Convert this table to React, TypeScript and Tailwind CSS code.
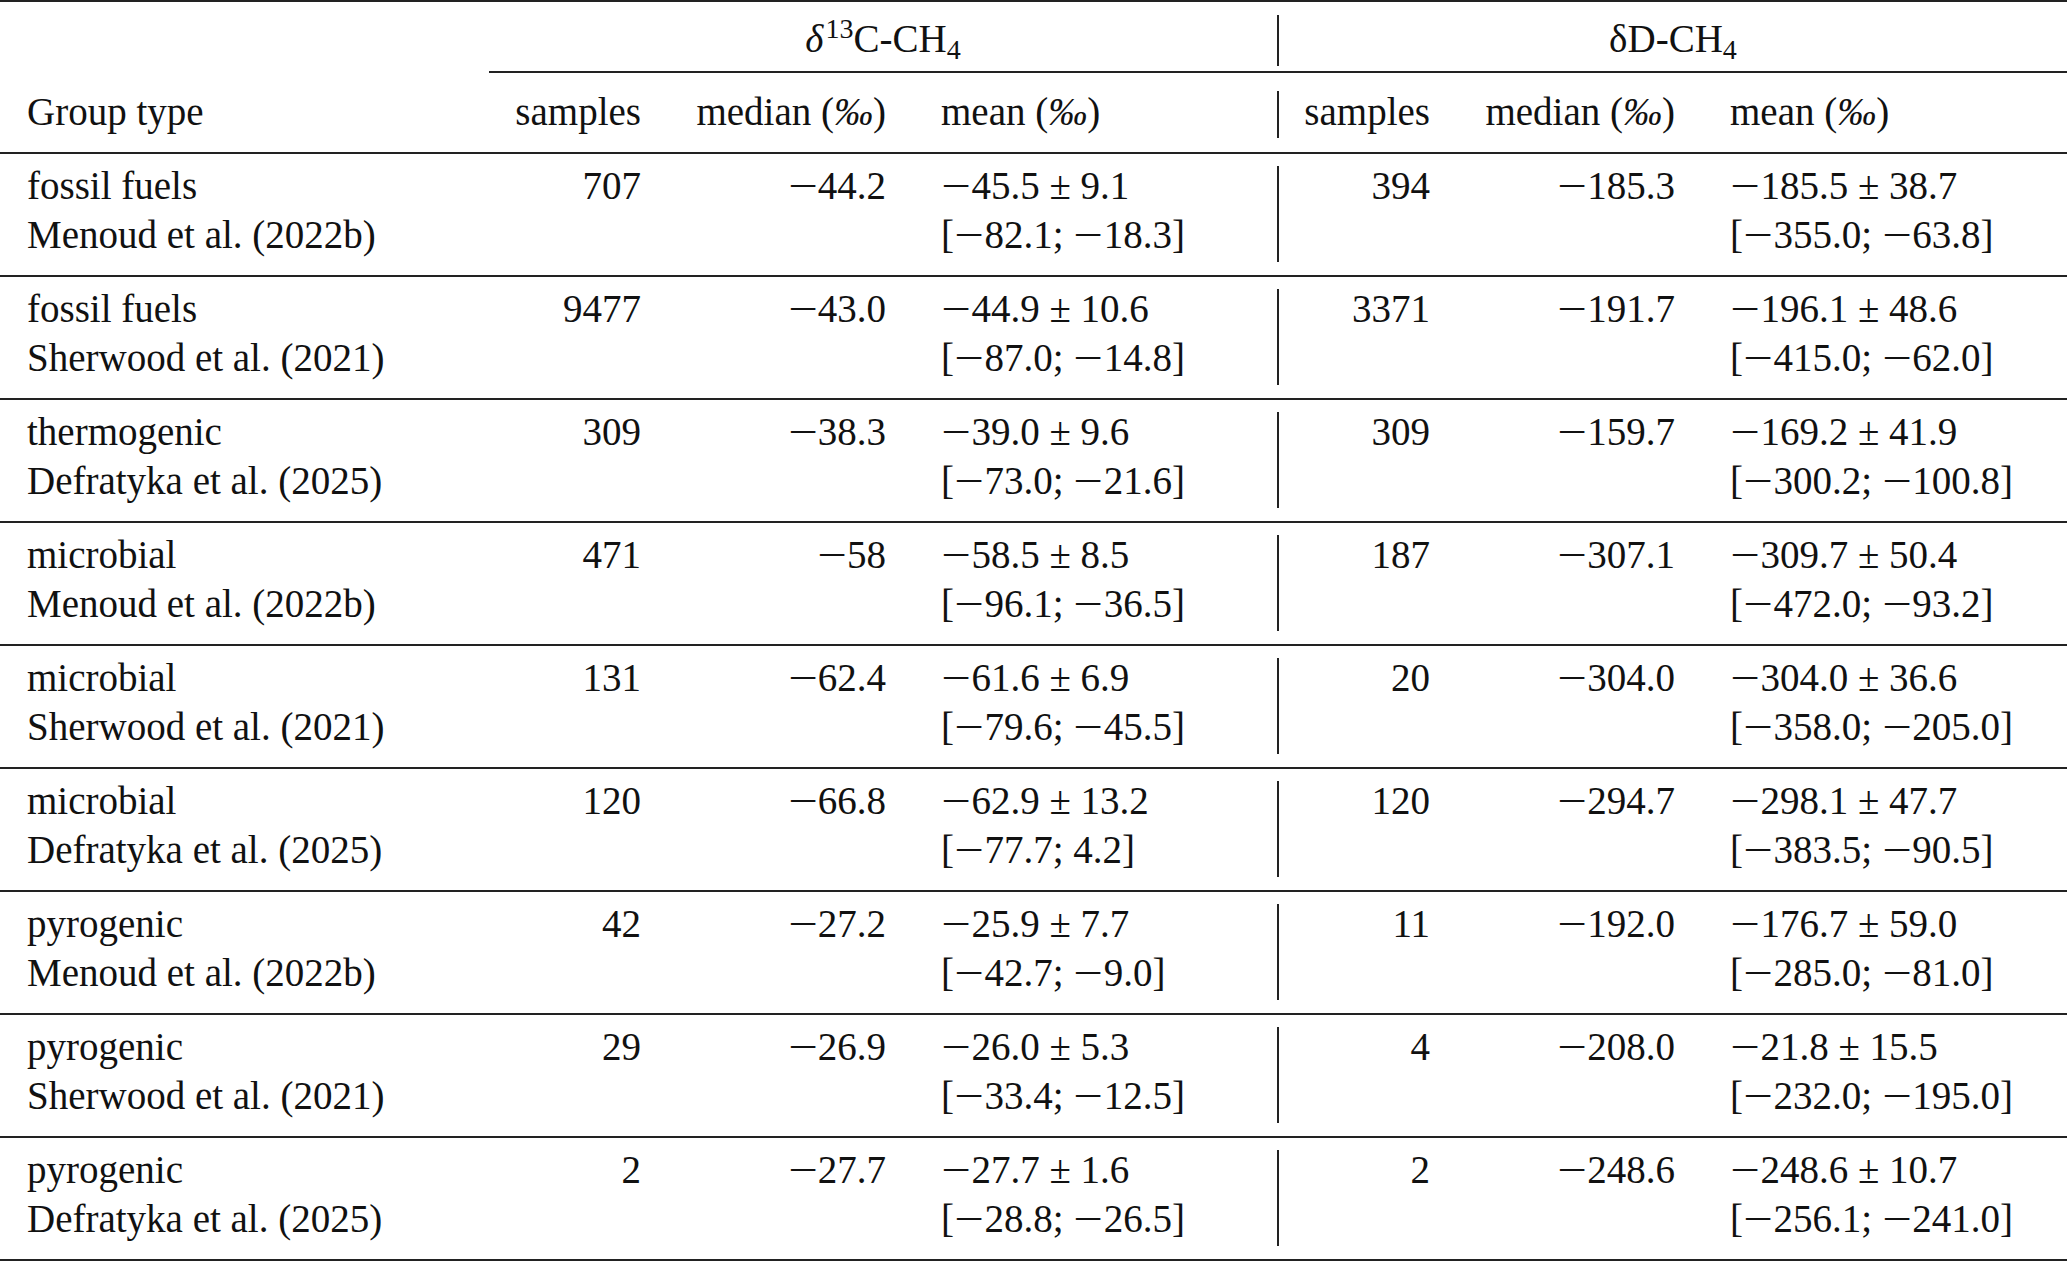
import React from "react";

type Row = {
  group: string;
  source: string;
  c: [string, string, string, string];
  d: [string, string, string, string];
};

const ROWS: Row[] = [
  { group: "fossil fuels", source: "Menoud et al. (2022b)", c: ["707", "−44.2", "−45.5 ± 9.1", "[−82.1; −18.3]"], d: ["394", "−185.3", "−185.5 ± 38.7", "[−355.0; −63.8]"] },
  { group: "fossil fuels", source: "Sherwood et al. (2021)", c: ["9477", "−43.0", "−44.9 ± 10.6", "[−87.0; −14.8]"], d: ["3371", "−191.7", "−196.1 ± 48.6", "[−415.0; −62.0]"] },
  { group: "thermogenic", source: "Defratyka et al. (2025)", c: ["309", "−38.3", "−39.0 ± 9.6", "[−73.0; −21.6]"], d: ["309", "−159.7", "−169.2 ± 41.9", "[−300.2; −100.8]"] },
  { group: "microbial", source: "Menoud et al. (2022b)", c: ["471", "−58", "−58.5 ± 8.5", "[−96.1; −36.5]"], d: ["187", "−307.1", "−309.7 ± 50.4", "[−472.0; −93.2]"] },
  { group: "microbial", source: "Sherwood et al. (2021)", c: ["131", "−62.4", "−61.6 ± 6.9", "[−79.6; −45.5]"], d: ["20", "−304.0", "−304.0 ± 36.6", "[−358.0; −205.0]"] },
  { group: "microbial", source: "Defratyka et al. (2025)", c: ["120", "−66.8", "−62.9 ± 13.2", "[−77.7; 4.2]"], d: ["120", "−294.7", "−298.1 ± 47.7", "[−383.5; −90.5]"] },
  { group: "pyrogenic", source: "Menoud et al. (2022b)", c: ["42", "−27.2", "−25.9 ± 7.7", "[−42.7; −9.0]"], d: ["11", "−192.0", "−176.7 ± 59.0", "[−285.0; −81.0]"] },
  { group: "pyrogenic", source: "Sherwood et al. (2021)", c: ["29", "−26.9", "−26.0 ± 5.3", "[−33.4; −12.5]"], d: ["4", "−208.0", "−21.8 ± 15.5", "[−232.0; −195.0]"] },
  { group: "pyrogenic", source: "Defratyka et al. (2025)", c: ["2", "−27.7", "−27.7 ± 1.6", "[−28.8; −26.5]"], d: ["2", "−248.6", "−248.6 ± 10.7", "[−256.1; −241.0]"] },
];

// rules (booktabs-like)
const Rule = () => <div className="h-[2px] w-full bg-[#222]" />;

const Permil = () => (
  <span>
    (<i>‰</i>)
  </span>
);

// math minus is wider than the text one
function Num({ text }: { text: string }) {
  const parts = text.split("−");
  return (
    <>
      {parts.map((p, i) => (
        <React.Fragment key={i}>
          {i > 0 && (
            <span className="inline-block w-[0.78em] text-center">
              <span className="inline-block scale-x-[1.35]">−</span>
            </span>
          )}
          {p}
        </React.Fragment>
      ))}
    </>
  );
}

function DataRow({ row }: { row: Row }) {
  return (
    <div className="flex items-stretch">
      <div className="w-[489px] shrink-0 pl-[27px] pt-[7px] pb-[16px]">
        <div>{row.group}</div>
        <div>{row.source}</div>
      </div>
      <div className="w-[152px] shrink-0 text-right pt-[7px]">{row.c[0]}</div>
      <div className="w-[245px] shrink-0 text-right pt-[7px]">
        <Num text={row.c[1]} />
      </div>
      <div className="w-[391px] shrink-0 pl-[55px] pt-[7px]">
        <div>
          <Num text={row.c[2]} />
        </div>
        <div>
          <Num text={row.c[3]} />
        </div>
      </div>
      <div className="w-[2px] shrink-0 mt-[12px] mb-[13px] bg-[#222]" />
      <div className="w-[151px] shrink-0 text-right pt-[7px]">{row.d[0]}</div>
      <div className="w-[245px] shrink-0 text-right pt-[7px]">
        <Num text={row.d[1]} />
      </div>
      <div className="flex-1 pl-[55px] pt-[7px]">
        <div>
          <Num text={row.d[2]} />
        </div>
        <div>
          <Num text={row.d[3]} />
        </div>
      </div>
    </div>
  );
}

export default function App() {
  return (
    <div
      className="w-[2067px] h-[1261px] bg-white text-[#111] text-[39px] leading-[49px] overflow-hidden"
      style={{ fontFamily: '"Liberation Serif", "Times New Roman", serif' }}
    >
      <Rule />

      {/* header */}
      <div className="flex">
        <div className="w-[489px] shrink-0 pl-[27px] flex items-end pb-[16px]">Group type</div>
        <div className="flex-1 flex flex-col">
          <div className="flex h-[69px]">
            <div className="w-[788px] shrink-0 text-center pt-[12px]">
              <i>δ</i>
              <sup className="text-[0.72em] ml-[2px]">13</sup>C-CH<sub className="text-[0.72em]">4</sub>
            </div>
            <div className="w-[2px] shrink-0 mt-[13px] mb-[5px] bg-[#222]" />
            <div className="flex-1 text-center pt-[12px]">
              δD-CH<sub className="text-[0.72em]">4</sub>
            </div>
          </div>
          <Rule />
          <div className="flex h-[79px]">
            <div className="w-[152px] shrink-0 text-right pt-[14px]">samples</div>
            <div className="w-[245px] shrink-0 text-right pt-[14px]">
              median <Permil />
            </div>
            <div className="w-[391px] shrink-0 pl-[55px] pt-[14px]">
              mean <Permil />
            </div>
            <div className="w-[2px] shrink-0 mt-[18px] mb-[14px] bg-[#222]" />
            <div className="w-[151px] shrink-0 text-right pt-[14px]">samples</div>
            <div className="w-[245px] shrink-0 text-right pt-[14px]">
              median <Permil />
            </div>
            <div className="flex-1 pl-[55px] pt-[14px]">
              mean <Permil />
            </div>
          </div>
        </div>
      </div>
      <Rule />

      {ROWS.map((row, i) => (
        <div key={i}>
          <DataRow row={row} />
          <Rule />
        </div>
      ))}
    </div>
  );
}
